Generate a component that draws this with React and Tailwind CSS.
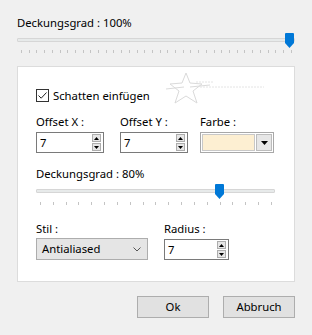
import React from "react";

const FONT = { fontFamily: '"Noto Sans", "Open Sans", sans-serif' };

function Thumb({ className }) {
  return (
    <svg className={className} width="9" height="15" viewBox="0 0 9 15">
      <path d="M1 0 H8 Q9 0 9 1 V10 L4.5 15 L0 10 V1 Q0 0 1 0 Z" fill="#0078d7" />
    </svg>
  );
}

function Ticks({ count, className }) {
  return (
    <div className={"flex justify-between " + className}>
      {Array.from({ length: count }).map((_, i) => (
        <div key={i} className="w-px h-[3px] bg-[#c4c4c4]" />
      ))}
    </div>
  );
}

function SpinBtns() {
  return (
    <div className="absolute right-[2px] top-[1px] bottom-[1px] w-[9px] flex flex-col gap-[1px]">
      <div className="flex-1 border border-[#adadad] bg-[#e6e6e6] flex items-center justify-center">
        <svg width="5" height="3" viewBox="0 0 5 3"><path d="M0 3 L2.5 0 L5 3 Z" fill="#000" /></svg>
      </div>
      <div className="flex-1 border border-[#adadad] bg-[#e6e6e6] flex items-center justify-center">
        <svg width="5" height="3" viewBox="0 0 5 3"><path d="M0 0 L2.5 3 L5 0 Z" fill="#000" /></svg>
      </div>
    </div>
  );
}

function SpinInput({ w }) {
  return (
    <div className={"relative h-[21px] border border-[#7a7a7a] bg-white pl-[3px] flex items-center " + w}>
      7
      <SpinBtns />
    </div>
  );
}

function Watermark() {
  return (
    <svg className="absolute left-[148px] top-[4px]" width="100" height="36" viewBox="0 0 100 36">
      <g fill="none" stroke="#dadada" strokeWidth="1">
        <path d="M20 2 L24 12 L36 13 L27 20 L31 32 L20 25 L9 32 L13 20 L4 13 L16 12 Z" />
        <path d="M0 18 L18 16 M24 16 L44 14" />
      </g>
      <g stroke="#e4e4e4" strokeWidth="1" strokeDasharray="2 1">
        <path d="M30 11 H48" />
        <path d="M34 16 H98" />
      </g>
    </svg>
  );
}

export default function App() {
  return (
    <div className="relative w-[312px] h-[335px] bg-[#f0f0f0] text-black text-[11.3px] leading-none overflow-hidden" style={FONT}>
      <div className="pl-[17px] pr-[17px] pt-[17px]">
        <div className="h-[12px] flex items-center">Deckungsgrad : 100%</div>
        <div className="relative mt-[9px] h-[4px] bg-[#e7eaea] border border-[#d6d6d6] rounded-[1px]">
          <Thumb className="absolute right-[0px] top-[-6px]" />
        </div>
        <Ticks count={36} className="mt-[8px] ml-[4px] mr-[3px]" />

        <div className="relative mt-[13px] h-[216px] bg-white border border-[#dcdcdc] pl-[18px] pr-[18px] pt-[22px]">
          <Watermark />
          <div className="flex items-center gap-[4px]">
            <div className="w-[13px] h-[13px] border border-[#333] bg-white flex items-center justify-center">
              <svg width="11" height="11" viewBox="0 0 11 11">
                <path d="M1.5 5.5 L4.2 8.2 L9.5 2.5" fill="none" stroke="#222" strokeWidth="1" />
              </svg>
            </div>
            <span>Schatten einfügen</span>
          </div>

          <div className="flex mt-[14px]">
            <div className="w-[84px]">
              <div className="h-[12px] flex items-center">Offset X :</div>
              <div className="mt-[4px]"><SpinInput w="w-[68px]" /></div>
            </div>
            <div className="w-[80px]">
              <div className="h-[12px] flex items-center">Offset Y :</div>
              <div className="mt-[4px]"><SpinInput w="w-[68px]" /></div>
            </div>
            <div>
              <div className="h-[12px] flex items-center">Farbe :</div>
              <div className="mt-[4px] w-[74px] h-[21px] border border-[#a8a8a8] bg-white p-[1px] flex gap-[1px]">
                <div className="flex-1 bg-[#fdefd2] border border-[#c8c8c8]" />
                <div className="w-[16px] bg-[#e6e6e6] border border-[#bcbcbc] flex items-center justify-center">
                  <svg width="7" height="4" viewBox="0 0 7 4"><path d="M0 0 L3.5 4 L7 0 Z" fill="#000" /></svg>
                </div>
              </div>
            </div>
          </div>

          <div className="mt-[15px] h-[12px] flex items-center">Deckungsgrad : 80%</div>
          <div className="relative mt-[9px] mr-[1px] h-[4px] bg-[#e7eaea] border border-[#d6d6d6] rounded-[1px]">
            <Thumb className="absolute left-[178px] top-[-6px]" />
          </div>
          <Ticks count={19} className="mt-[9px] ml-[4px] mr-[4px]" />

          <div className="flex mt-[18px]">
            <div className="w-[128px]">
              <div className="h-[12px] flex items-center">Stil :</div>
              <div className="mt-[3px] w-[112px] h-[22px] border border-[#adadad] bg-[#e5e5e5] pl-[5px] pr-[6px] flex items-center justify-between">
                <span>Antialiased</span>
                <svg width="8" height="5" viewBox="0 0 8 5"><path d="M0.5 0.5 L4 4 L7.5 0.5" fill="none" stroke="#555" strokeWidth="1" /></svg>
              </div>
            </div>
            <div>
              <div className="h-[12px] flex items-center">Radius :</div>
              <div className="mt-[4px]"><SpinInput w="w-[65px]" /></div>
            </div>
          </div>
        </div>

        <div className="flex justify-end gap-[14px] mt-[14px]">
          <div className="w-[72px] h-[22px] bg-[#e1e1e1] border border-[#adadad] flex items-center justify-center">Ok</div>
          <div className="w-[72px] h-[22px] bg-[#e1e1e1] border border-[#adadad] flex items-center justify-center">Abbruch</div>
        </div>
      </div>
    </div>
  );
}
